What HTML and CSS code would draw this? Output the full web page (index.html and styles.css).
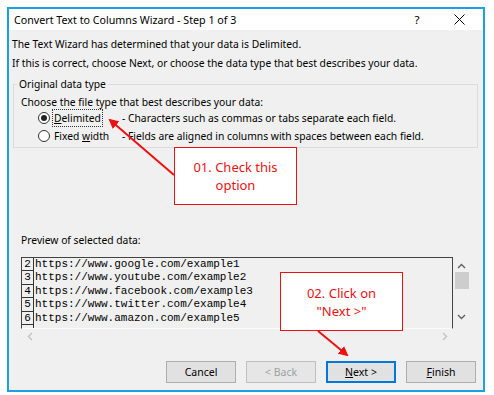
FILE: index.html
```html
<!DOCTYPE html>
<html lang="en">
<head>
  <meta charset="UTF-8">
  <meta name="viewport" content="width=device-width, initial-scale=1.0">
  <title>Convert Text to Columns Wizard</title>
  <link rel="stylesheet" href="styles.css">
</head>
<body>
  <div class="window">
    <div class="titlebar">
      <span class="title">Convert Text to Columns Wizard - Step 1 of 3</span>
      <span class="help">?</span>
      <svg class="close" width="11" height="11" viewBox="0 0 11 11">
        <path d="M0.5 0.5 L10.5 10.5 M10.5 0.5 L0.5 10.5" stroke="#000" stroke-width="1" fill="none"/>
      </svg>
    </div>

    <div class="content">
      <p class="intro">The Text Wizard has determined that your data is Delimited.</p>
      <p class="intro">If this is correct, choose Next, or choose the data type that best describes your data.</p>

      <fieldset class="group">
        <legend>Original data type</legend>
        <p class="choose">Choose the file type that best describes your data:</p>
        <div class="option">
          <span class="radio checked"></span>
          <span class="opt-label"><span class="focus"><u>D</u>elimited</span></span>
          <span class="opt-desc">- Characters such as commas or tabs separate each field.</span>
        </div>
        <div class="option">
          <span class="radio"></span>
          <span class="opt-label">Fixed <u>w</u>idth</span>
          <span class="opt-desc">- Fields are aligned in columns with spaces between each field.</span>
        </div>
      </fieldset>

      <p class="preview-label">Preview of selected data:</p>
      <div class="preview">
        <div class="rows">
          <div class="row"><span class="num">2</span><span class="url">https://www.google.com/example1</span></div>
          <div class="row"><span class="num">3</span><span class="url">https://www.youtube.com/example2</span></div>
          <div class="row"><span class="num">4</span><span class="url">https://www.facebook.com/example3</span></div>
          <div class="row"><span class="num">5</span><span class="url">https://www.twitter.com/example4</span></div>
          <div class="row"><span class="num">6</span><span class="url">https://www.amazon.com/example5</span></div>
          <div class="row"><span class="num"></span></div>
        </div>
        <div class="vscroll">
          <svg width="9" height="6" viewBox="0 0 9 6"><path d="M1 5 L4.5 1.5 L8 5" stroke="#606060" stroke-width="1.4" fill="none"/></svg>
          <div class="thumb"></div>
          <svg class="down" width="9" height="6" viewBox="0 0 9 6"><path d="M1 1 L4.5 4.5 L8 1" stroke="#606060" stroke-width="1.4" fill="none"/></svg>
        </div>
        <div class="hscroll">
          <svg width="6" height="9" viewBox="0 0 6 9"><path d="M5 1 L1.5 4.5 L5 8" stroke="#c2c2c2" stroke-width="1.4" fill="none"/></svg>
          <svg width="6" height="9" viewBox="0 0 6 9"><path d="M1 1 L4.5 4.5 L1 8" stroke="#c2c2c2" stroke-width="1.4" fill="none"/></svg>
        </div>
      </div>

      <div class="buttons">
        <button class="btn">Cancel</button>
        <button class="btn disabled">&lt; Back</button>
        <button class="btn default"><u>N</u>ext &gt;</button>
        <button class="btn"><u>F</u>inish</button>
      </div>
    </div>
  </div>

  <!-- annotations drawn over the dialog -->
  <svg class="arrows" width="494" height="395" viewBox="0 0 494 395">
    <defs>
      <marker id="head" markerWidth="5" markerHeight="5" refX="4" refY="2.5" orient="auto" markerUnits="strokeWidth">
        <path d="M0 0 L5 2.5 L0 5 Z" fill="#ee1111"/>
      </marker>
    </defs>
    <line x1="174" y1="175" x2="110" y2="120" stroke="#ee1111" stroke-width="2" marker-end="url(#head)"/>
    <line x1="318" y1="331" x2="347" y2="355" stroke="#ee1111" stroke-width="2" marker-end="url(#head)"/>
  </svg>
  <div class="callout first">01. Check this<br>option</div>
  <div class="callout second">02. Click on<br>"Next &gt;"</div>
</body>
</html>
```

FILE: styles.css
```css
body {
  margin: 0;
  background: #fff;
  font-family: "Noto Sans", "Open Sans", sans-serif;
  font-size: 10.3px;
  color: #000;
  position: relative;
  width: 494px;
  height: 395px;
  overflow: hidden;
}

p {
  margin: 0;
}

.window {
  margin: 7px 0 0 7px;
  width: 478px;
  box-sizing: border-box;
  border: 2px solid #1ba1e2;
  background: #f0f0f0;
}

.titlebar {
  height: 21px;
  background: #fff;
  display: flex;
  align-items: center;
  padding-left: 5px;
  font-size: 10.7px;
}

.title {
  flex: 1;
}

.help {
  width: 10px;
  margin-right: 32px;
  text-align: center;
  font-size: 11.5px;
}

.close {
  margin-right: 18px;
}

.content {
  padding: 5px 0 7px 3px;
}

.intro {
  line-height: 19px;
}

.group {
  margin: 3px 5px 0 1px;
  padding: 0 0 2px 7px;
  border: 1px solid #dcdcdc;
}

.group legend {
  padding: 0 2px;
  margin-left: -4px;
  line-height: 16px;
}

.choose {
  line-height: 14px;
  margin-top: 3px;
}

.option {
  display: flex;
  align-items: center;
  height: 18px;
}

.radio {
  width: 12px;
  height: 12px;
  box-sizing: border-box;
  border: 1px solid #333;
  border-radius: 50%;
  background: #fff;
  margin-left: 17px;
  display: flex;
  align-items: center;
  justify-content: center;
}

.radio.checked::after {
  content: "";
  width: 6px;
  height: 6px;
  border-radius: 50%;
  background: #222;
}

.opt-label {
  width: 68px;
  margin-left: 4px;
}

.focus {
  outline: 1px dotted #333;
  outline-offset: 1px;
}

.preview-label {
  line-height: 16px;
  margin: 84px 0 0 9px;
}

.preview {
  display: grid;
  grid-template-columns: 432px 17px;
  margin: 9px 0 0 9px;
  width: 449px;
}

.rows {
  height: 72px;
  box-sizing: border-box;
  border: 1px solid #444;
  border-bottom: 1px solid #fbfbfb;
  overflow: hidden;
  font-family: "Liberation Mono", "Courier New", monospace;
  font-size: 11px;
}

.row {
  display: flex;
  height: 13.4px;
  line-height: 13px;
}

.num {
  width: 12px;
  box-sizing: border-box;
  border-right: 1px solid #333;
  border-bottom: 1px solid #333;
  text-align: center;
}

.url {
  padding-left: 1px;
}

.vscroll {
  display: flex;
  flex-direction: column;
  align-items: center;
  padding-top: 6px;
}

.thumb {
  width: 14px;
  height: 17px;
  background: #cdcdcd;
  margin-top: 3px;
}

.vscroll .down {
  margin-top: 25px;
}

.hscroll {
  height: 15px;
  display: flex;
  align-items: center;
  justify-content: space-between;
  padding: 0 5px 0 6px;
}

.buttons {
  display: flex;
  justify-content: flex-end;
  gap: 10px;
  margin: 17px 7px 0 0;
}

.btn {
  width: 70px;
  height: 22px;
  font-family: inherit;
  font-size: 10.5px;
  color: #000;
  background: #e1e1e1;
  border: 1px solid #adadad;
  padding: 0;
}

.btn.disabled {
  color: #a0a0a0;
  border-color: #bfbfbf;
  background: #e6e6e6;
}

.btn.default {
  border-color: #0078d7;
  box-shadow: inset 0 0 0 1px #0078d7;
}

.arrows {
  position: absolute;
  left: 0;
  top: 0;
  pointer-events: none;
}

.callout {
  position: absolute;
  width: 123px;
  box-sizing: border-box;
  border: 1.5px solid #ee1111;
  background: #fff;
  color: #ee1111;
  font-size: 13px;
  line-height: 18px;
  text-align: center;
}

.callout.first {
  left: 174px;
  top: 147px;
  height: 58px;
  padding-top: 10px;
}

.callout.second {
  left: 280px;
  top: 272px;
  height: 59px;
  padding-top: 11px;
}
```
